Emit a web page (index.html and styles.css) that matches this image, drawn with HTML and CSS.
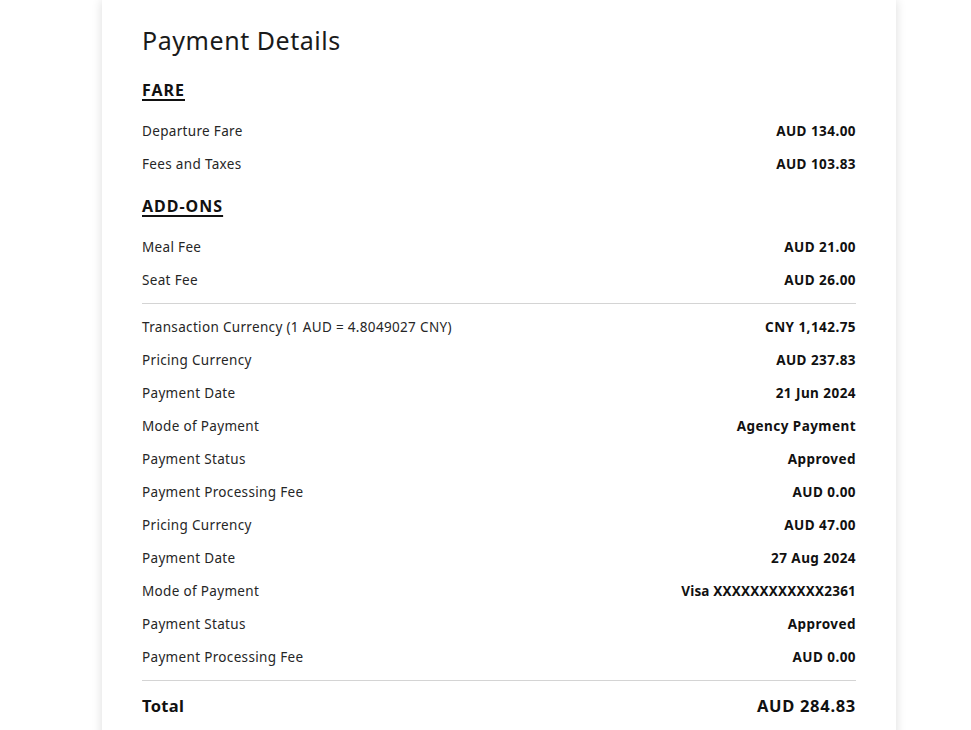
FILE: index.html
```html
<!DOCTYPE html>
<html lang="en">
<head>
<meta charset="utf-8">
<title>Payment Details</title>
<link rel="stylesheet" href="styles.css">
</head>
<body>
<main class="card">
  <h1 class="title">Payment Details</h1>

  <h2 class="section-head">FARE</h2>
  <div class="rows">
    <div class="row"><span class="label">Departure Fare</span><span class="value">AUD 134.00</span></div>
    <div class="row"><span class="label">Fees and Taxes</span><span class="value">AUD 103.83</span></div>
  </div>

  <h2 class="section-head">ADD-ONS</h2>
  <div class="rows">
    <div class="row"><span class="label">Meal Fee</span><span class="value">AUD 21.00</span></div>
    <div class="row"><span class="label">Seat Fee</span><span class="value">AUD 26.00</span></div>
  </div>

  <hr class="divider">

  <div class="rows">
    <div class="row"><span class="label">Transaction Currency (1 AUD = 4.8049027 CNY)</span><span class="value">CNY 1,142.75</span></div>
    <div class="row"><span class="label">Pricing Currency</span><span class="value">AUD 237.83</span></div>
    <div class="row"><span class="label">Payment Date</span><span class="value">21 Jun 2024</span></div>
    <div class="row"><span class="label">Mode of Payment</span><span class="value">Agency Payment</span></div>
    <div class="row"><span class="label">Payment Status</span><span class="value">Approved</span></div>
    <div class="row"><span class="label">Payment Processing Fee</span><span class="value">AUD 0.00</span></div>
    <div class="row"><span class="label">Pricing Currency</span><span class="value">AUD 47.00</span></div>
    <div class="row"><span class="label">Payment Date</span><span class="value">27 Aug 2024</span></div>
    <div class="row"><span class="label">Mode of Payment</span><span class="value value-card">Visa XXXXXXXXXXXX2361</span></div>
    <div class="row"><span class="label">Payment Status</span><span class="value">Approved</span></div>
    <div class="row"><span class="label">Payment Processing Fee</span><span class="value">AUD 0.00</span></div>
  </div>

  <hr class="divider divider-total">

  <div class="row total"><span class="label">Total</span><span class="value">AUD 284.83</span></div>
</main>
</body>
</html>
```

FILE: styles.css
```css
html, body {
  margin: 0;
  padding: 0;
  background: #ffffff;
}

body {
  font-family: "Noto Sans", "DejaVu Sans", sans-serif;
  color: #1e1e1e;
  height: 730px;
  overflow: hidden;
}

.card {
  width: 794px;
  margin-left: 102px;
  box-sizing: border-box;
  padding: 21px 40px 40px;
  background: #fff;
  box-shadow: 0 0 10px rgba(0, 0, 0, 0.14);
  display: flex;
  flex-direction: column;
}

.title {
  margin: 0;
  font-size: 25px;
  font-weight: 400;
  line-height: 38px;
  letter-spacing: 0.55px;
  color: #1a1a1a;
}

.section-head {
  margin: 21px 0 14px;
  font-size: 16px;
  font-weight: 700;
  line-height: 20px;
  text-decoration: underline;
  text-underline-offset: 3px;
  text-decoration-thickness: 1.5px;
  align-self: flex-start;
  letter-spacing: 1px;
  color: #111;
}

.rows + .section-head {
  margin-top: 16px;
}

.rows {
  display: flex;
  flex-direction: column;
}

.row {
  display: flex;
  justify-content: space-between;
  align-items: center;
  height: 33px;
  font-size: 13.5px;
  letter-spacing: 0.33px;
}

.label {
  color: #262626;
}

.value {
  font-weight: 700;
  color: #111;
  letter-spacing: 0.45px;
}

.value-card {
  letter-spacing: 0.2px;
}

.divider {
  margin: 7px 0 6px;
  border: 0;
  border-top: 1px solid #d4d4d4;
  height: 0;
  width: 100%;
}

.divider-total {
  margin: 7px 0 7px;
}

.total {
  height: 34px;
  font-size: 16.5px;
}

.total .label {
  font-weight: 700;
  color: #111;
}

.total .value {
  letter-spacing: 0.7px;
}
```
